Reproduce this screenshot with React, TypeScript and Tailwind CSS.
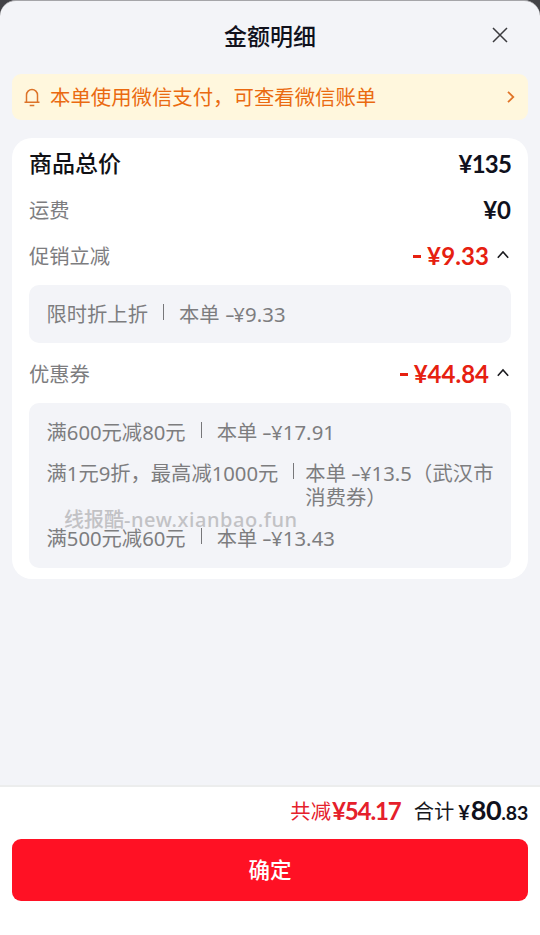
import type { ReactNode } from "react";

function Chevron() {
  return (
    <svg className="ml-[8px] h-[12px] w-[14px] shrink-0" viewBox="0 0 14 12" fill="none" stroke="#1b1b1f" strokeWidth="1.6">
      <path d="M.8 8.7 6 3l5.2 5.7" />
    </svg>
  );
}

const cjk = "font-['Noto_Sans_CJK_SC',sans-serif]";
const num = "font-['Lato',sans-serif] font-bold";
const mixed = "font-['Noto_Sans','Noto_Sans_CJK_SC',sans-serif]";

function Minus({ children, wide }: { children: ReactNode; wide?: boolean }) {
  return (
    <div className="flex items-center text-[#e62010]">
      <i className="mr-[6px] mt-[3px] h-[2.5px] w-[8px] bg-[#e62010]" />
      <span className={`${num} mt-px text-[24px] leading-[24px] ${wide ? "tracking-[0.1px]" : "tracking-[0px]"}`}>{children}</span>
      <Chevron />
    </div>
  );
}

function Row({ label, children, className }: { label: string; children: ReactNode; className: string }) {
  return (
    <div className={`flex items-center justify-between ${className}`}>
      <span className="text-[20.3px] text-[#7d7d7f]">{label}</span>
      {children}
    </div>
  );
}

function Amount({ children }: { children: ReactNode }) {
  return (
    <>
      本单 <span className="mr-[2px] inline-block origin-left scale-x-150">-</span>
      <span className="tracking-[0.1px]">{children}</span>
    </>
  );
}

function Item({ name, value, tight }: { name: string; value: ReactNode; tight?: boolean }) {
  return (
    <div className={`flex items-start text-[20.3px] leading-[24px] text-[#7d7d7f] ${mixed}`}>
      <span className="whitespace-nowrap">{name}</span>
      <i className={`mt-[2px] h-[16px] w-px shrink-0 bg-[#77777a] ${tight ? "ml-[15px] mr-[11px]" : "ml-[15px] mr-[15px]"}`} />
      <span className="whitespace-nowrap">{value}</span>
    </div>
  );
}

export default function App() {
  return (
    <div className={`h-[935px] w-[540px] overflow-hidden bg-[#434347] ${cjk}`}>
      <div className="flex h-full flex-col overflow-hidden rounded-t-[16px] border-t border-[#a5a5a9] bg-[#f3f4f8]">
        <header className="relative flex h-[73px] shrink-0 items-center justify-center pb-[5px]">
          <h1 className="text-[23px] font-medium text-[#10111c]">金额明细</h1>
          <svg className="absolute left-[492px] top-[26px] h-[16px] w-[16px]" viewBox="0 0 16 16" stroke="#3b3b3f" strokeWidth="1.5">
            <path d="M1 1l14 14M15 1L1 15" />
          </svg>
        </header>

        <div className="mx-[12px] flex h-[46px] shrink-0 items-center rounded-[9px] bg-[#fff7dd] pl-[12px] pr-[12px] text-[#ea6a10]">
          <svg className="h-[20px] w-[16px]" viewBox="0 0 16 20" fill="none" stroke="#dc7328" strokeWidth="1.5">
            <path d="M.5 15.2h15M2.5 15.2V8a5.5 5.5 0 0 1 11 0v7.2M5.7 18.5h4.6" />
          </svg>
          <span className="mb-[2px] ml-[10px] flex-1 text-[20.4px]">本单使用微信支付，可查看微信账单</span>
          <svg className="h-[12px] w-[10px]" viewBox="0 0 10 12" fill="none" stroke="#e07428" strokeWidth="1.8">
            <path d="M2 .8 7.3 6 2 11.2" />
          </svg>
        </div>

        <main className="mx-[12px] mt-[18px] flex h-[441px] shrink-0 flex-col rounded-[20px] bg-white px-[17px]">
          <div className="flex h-[50px] items-center justify-between">
            <h2 className="mb-[2px] text-[23px] font-medium text-[#111115]">商品总价</h2>
            <span className={`${num} mt-[2px] text-[24px] tracking-[-0.8px] text-[#10111c]`}>¥135</span>
          </div>
          <Row label="运费" className="h-[43px]">
            <span className={`${num} mt-px text-[24px] text-[#10111c]`}>¥0</span>
          </Row>
          <Row label="促销立减" className="h-[48px]">
            <Minus wide>¥9.33</Minus>
          </Row>
          <section className="mt-[6px] h-[58px] rounded-[10px] bg-[#f3f4f8] px-[17.5px] pt-[17px]">
            <Item name="限时折上折" value={<Amount>¥9.33</Amount>} />
          </section>
          <Row label="优惠券" className="h-[60px]">
            <Minus>¥44.84</Minus>
          </Row>
          <section className="relative flex h-[165px] flex-col gap-[17px] rounded-[10px] bg-[#f3f4f8] px-[17.5px] pt-[17px]">
            <Item name="满600元减80元" value={<Amount>¥17.91</Amount>} />
            <Item tight name="满1元9折，最高减1000元" value={<><Amount>¥13.5（武汉市</Amount><br />消费券）</>} />
            <Item name="满500元减60元" value={<Amount>¥13.43</Amount>} />
            <span className={`absolute left-[35px] top-[105px] whitespace-nowrap text-[20px] font-medium leading-[24px] text-[#c2c2c5] ${mixed}`}>
              线报酷<span className="tracking-[0.55px]">-new.xianbao.fun</span>
            </span>
          </section>
        </main>

        <footer className="mt-auto h-[150px] shrink-0 border-t-2 border-[#eceded] bg-white px-[12px]">
          <div className="flex h-[52px] items-baseline justify-end pt-[5px] text-[20.3px] leading-[36px]">
            <span className="relative -top-px text-[#e5202b]">共减</span>
            <span className={`${num} ml-px text-[24px] tracking-[-1.1px] text-[#e5202b]`}>¥54.17</span>
            <span className="relative -top-px ml-[13px] text-[#18181d]">合计</span>
            <span className={`${num} ml-[4px] text-[20px] text-[#10111c]`}>¥</span>
            <span className={`${num} ml-px text-[27px] tracking-[-0.4px] text-[#10111c]`}>80</span>
            <span className={`${num} text-[19.5px] tracking-[-0.2px] text-[#10111c]`}>.83</span>
          </div>
          <button className="flex h-[62px] w-full items-center justify-center rounded-[9px] bg-[#ff1124] pb-[2px] text-[21.5px] font-medium text-white">
            确定
          </button>
        </footer>
      </div>
    </div>
  );
}
